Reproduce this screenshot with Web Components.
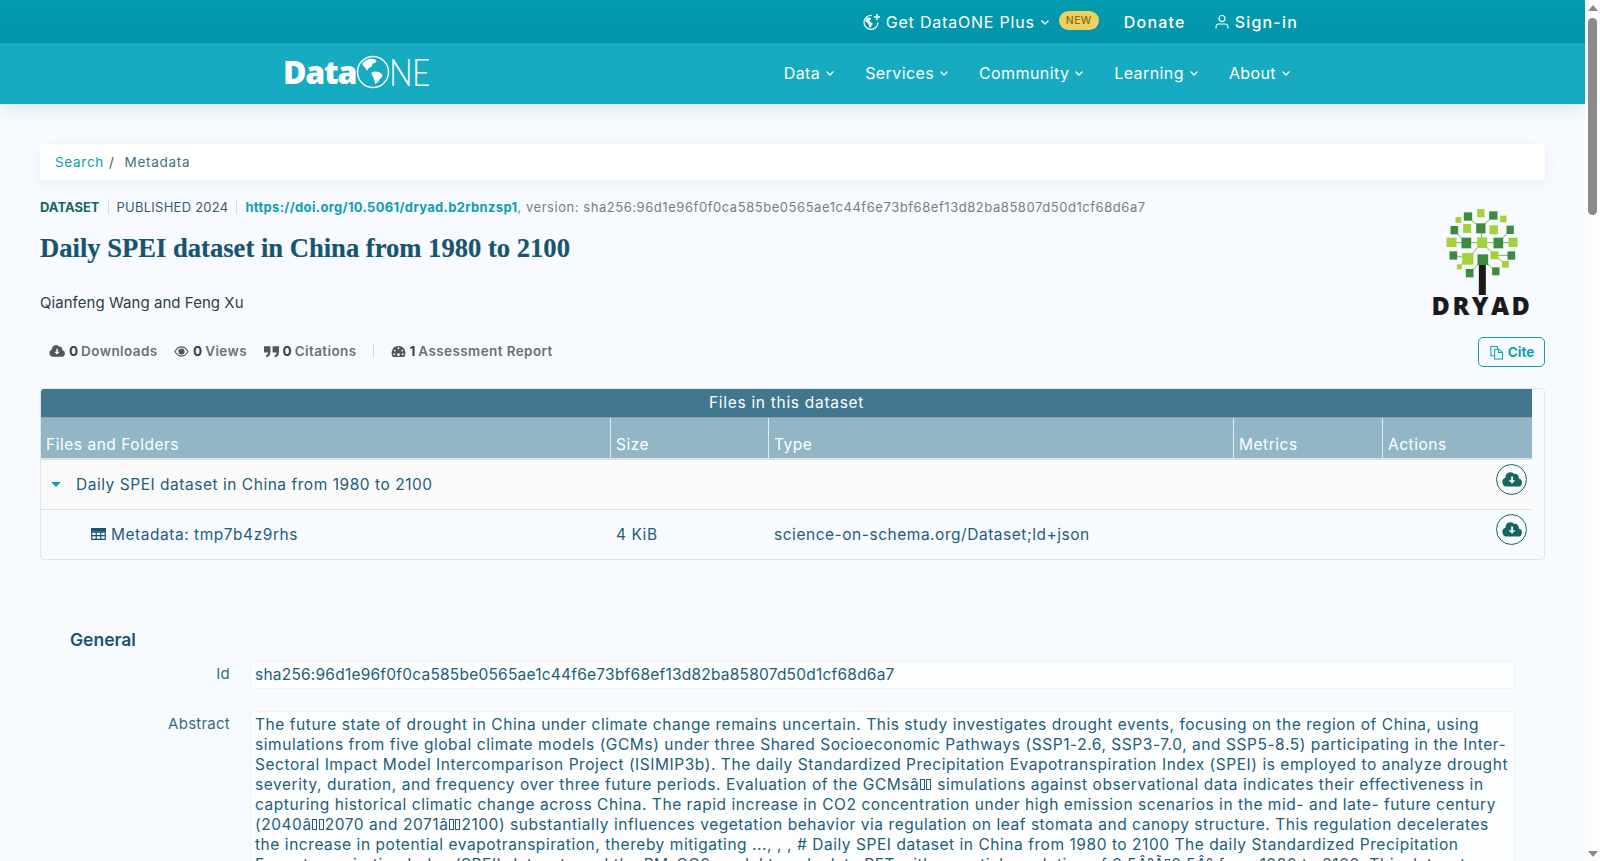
<!DOCTYPE html>
<html lang="en">
<head>
<meta charset="utf-8">
<title>Daily SPEI dataset in China from 1980 to 2100</title>
<style>
  html, body { height: 100%; overflow: hidden; }
  body { margin: 0; background: #f7fbff; font-family: "Inter", "Liberation Sans", sans-serif; color: #19546f; }
  .tofu { display: inline-block; box-sizing: border-box; width: 5px; height: 11px; margin: 0 1px 0 .5px; border: 1px solid currentColor; }
</style>
</head>
<body>

<app-shell>
  <site-header></site-header>
  <main-wrap>
    <bread-crumb></bread-crumb>
    <dataset-head></dataset-head>
    <file-table></file-table>
    <meta-section heading="General">
      <meta-field label="Id" style="--ls: .22px">sha256:96d1e96f0f0ca585be0565ae1c44f6e73bf68ef13d82ba85807d50d1cf68d6a7</meta-field>
      <meta-field label="Abstract" id="abstract"></meta-field>
    </meta-section>
  </main-wrap>
</app-shell>

<script>
const FONT = '"Inter", "Open Sans", "Liberation Sans", sans-serif';
const chevron = '<svg class="chev" viewBox="0 0 10 10" width="10" height="10"><path d="M1.5 3.5 5 7l3.500-3.500" fill="none" stroke="currentColor" stroke-width="1.300"/></svg>';
const cloudDown = '<svg viewBox="0 0 24 18" fill="currentColor"><path d="M20 7.800A4.500 4.500 0 0 0 14.800 2.300 6 6 0 0 0 4.300 6.600 5.600 5.600 0 0 0 6 17.500h13a4.900 4.900 0 0 0 1-9.700Z"/><path d="M11 5.500h2.200V10h2.900L12 14.200 7.900 10H11Z" fill="var(--hole, #fff)"/></svg>';

// @ marks a byte of the abstract that does not decode: it shows as a small box
const ABSTRACT = 'The future state of drought in China under climate change remains uncertain. This study investigates drought events, focusing on the region of China, using simulations from five global climate models (GCMs) under three Shared Socioeconomic Pathways (SSP1-2.6, SSP3-7.0, and SSP5-8.5) participating in the Inter-Sectoral Impact Model Intercomparison Project (ISIMIP3b). The daily Standardized Precipitation Evapotranspiration Index (SPEI) is employed to analyze drought severity, duration, and frequency over three future periods. Evaluation of the GCMs\u00e2@@ simulations against observational data indicates their effectiveness in capturing historical climatic change across China. The rapid increase in CO2 concentration under high emission scenarios in the mid- and late- future century (2040\u00e2@@2070 and 2071\u00e2@@2100) substantially influences vegetation behavior via regulation on leaf stomata and canopy structure. This regulation decelerates the increase in potential evapotranspiration, thereby mitigating ..., , , # Daily SPEI dataset in China from 1980 to 2100 The daily Standardized Precipitation Evapotranspiration Index (SPEI) dataset used the PM-CO2 model to calculate PET with a spatial resolution of 0.5\u00c2\u00b0\u00c3@0.5\u00c2\u00b0 from 1980 to 2100. This dataset';

class AppShell extends HTMLElement {
  constructor() {
    super();
    this.attachShadow({ mode: 'open' });
    this.shadowRoot.innerHTML = `
      <style>
        :host { display: flex; height: 100vh; }
        .page { flex: 1; min-width: 0; overflow: hidden; }
        .scroll { flex: none; width: 15px; background: #fbfdff; display: flex; flex-direction: column; align-items: center; padding: 5px 0 4px; box-sizing: border-box; }
        .up, .down { width: 0; height: 0; border: 5px solid transparent; }
        .up { border-top: 0; border-bottom: 6px solid #8a8a8a; }
        .down { border-bottom: 0; border-top: 6px solid #8a8a8a; margin-top: auto; }
        .thumb { width: 9px; height: 197px; margin-top: 7px; background: #8a8a8a; border-radius: 5px; }
      </style>
      <div class="page"><slot></slot></div>
      <div class="scroll"><span class="up"></span><span class="thumb"></span><span class="down"></span></div>`;
  }
}

class SiteHeader extends HTMLElement {
  constructor() {
    super();
    this.attachShadow({ mode: 'open' });
    this.shadowRoot.innerHTML = `
      <style>
        :host { display: block; font-family: ${FONT}; color: #fff; box-shadow: 0 6px 18px rgba(60,110,140,.12); position: relative; }
        .top { height: 43px; background: linear-gradient(#049cb0, #0294a8); display: flex; justify-content: flex-end; align-items: center; padding-right: 287px; font-size: 16px; letter-spacing: .8px; }
        .plus { display: flex; align-items: center; gap: 5px; }
        .badge { background: #edd064; color: #8a6d12; font-size: 10.500px; font-weight: 500; border-radius: 10px; padding: 3px 7px; margin-left: 9px; margin-top: -3px; letter-spacing: .4px; }
        .donate { margin-left: 25px; font-weight: 500; letter-spacing: 1.200px; }
        .sign { margin-left: 28px; display: flex; align-items: center; gap: 5px; font-weight: 500; letter-spacing: 1.200px; }
        .main { height: 61px; background: #16abc0; display: flex; align-items: center; padding-left: 283px; padding-right: 294px; justify-content: space-between; }
        .logo { display: flex; align-items: center; font-family: "Open Sans", sans-serif; font-size: 32px; line-height: 34px; margin-top: -4px; }
        .logo b { font-weight: 800; letter-spacing: -1.200px; }
        .logo span { font-weight: 300; letter-spacing: -1px; font-size: 37px; margin-left: -1px; font-family: "Lato", sans-serif; transform: scaleX(.85); transform-origin: left; }
        nav { display: flex; gap: 30px; font-size: 16px; letter-spacing: .4px; margin-top: -1px; }
        nav a { display: flex; align-items: center; gap: 5px; }
        svg { display: block; }
      </style>
      <div class="top">
        <span class="plus">
          <svg viewBox="0 0 18 18" width="18" height="18" fill="none" stroke="#fff" stroke-width="1.200"><path d="M15 9.500A7 7 0 1 1 9 2.500"/><path d="M14 1v6M11 4h6" stroke-width="1.500"/><path d="M3.500 5c2-1 3.500-.5 4.500.5 0 1.500-1.500 1-1.500 2.500S9 9 9.500 10.500 8 13 7 15c-1-1-1-3-1.500-4S3 9 2.500 8Z" fill="#fff" stroke="none"/></svg>
          Get DataONE Plus ${chevron}
        </span>
        <span class="badge">NEW</span>
        <span class="donate">Donate</span>
        <span class="sign">
          <svg viewBox="0 0 16 16" width="16" height="16" fill="none" stroke="#fff" stroke-width="1.100"><circle cx="8" cy="4.500" r="3"/><path d="M2 14.500v-1.500a3 3 0 0 1 3-3h6a3 3 0 0 1 3 3v1.500"/></svg>
          Sign-in
        </span>
      </div>
      <div class="main">
        <div class="logo">
          <b>Data</b>
          <svg viewBox="0 0 34 34" width="34" height="34"><circle cx="17" cy="17" r="15.500" fill="none" stroke="#fff" stroke-width="1.400"/><path d="M6 9c3-4 7-6 12-5 3 1 3 3 1 4-2 0-3 1-3 3-1 2-3 1-4 3s-1 2-2 0c-1-2-3-3-4-5ZM16 17c3-1 7-1 10 2 1 2 0 3-2 5-1 2-3 4-5 5 0-3-1-5-2-7-1-2-2-4-1-5Z" fill="#fff"/></svg>
          <span>NE</span>
        </div>
        <nav>
          <a>Data ${chevron}</a>
          <a>Services ${chevron}</a>
          <a>Community ${chevron}</a>
          <a>Learning ${chevron}</a>
          <a>About ${chevron}</a>
        </nav>
      </div>`;
  }
}

class MainWrap extends HTMLElement {
  constructor() {
    super();
    this.attachShadow({ mode: 'open' });
    this.shadowRoot.innerHTML = `
      <style>
        :host { display: block; padding: 40px 40px 0; height: 757px; overflow: hidden; box-sizing: border-box; font-family: ${FONT}; }
      </style>
      <slot></slot>`;
  }
}

class BreadCrumb extends HTMLElement {
  constructor() {
    super();
    this.attachShadow({ mode: 'open' });
    this.shadowRoot.innerHTML = `
      <style>
        :host { display: flex; height: 36px; background: #fff; border-radius: 3px; box-shadow: 0 4px 14px rgba(60,90,110,.08); align-items: center; padding-left: 15px; font-size: 13.500px; letter-spacing: .7px; color: #3f6f87; }
        a { color: #119db0; }
        i { font-style: normal; margin: 0 10px 0 5px; color: #456; }
      </style>
      <a>Search</a><i>/</i><span>Metadata</span>`;
  }
}

class DatasetHead extends HTMLElement {
  constructor() {
    super();
    this.attachShadow({ mode: 'open' });
    this.shadowRoot.innerHTML = `
      <style>
        :host { display: flex; justify-content: space-between; margin-top: 18px; margin-bottom: 21px; }
        .left { min-width: 0; }
        .line { font-size: 13px; line-height: 18px; color: #767e84; white-space: nowrap; display: flex; align-items: center; letter-spacing: .55px; }
        .kind { font-weight: 700; color: #16665f; letter-spacing: 0; }
        .pub { color: #3c5a6b; letter-spacing: .25px; }
        .sep { width: 1px; height: 13px; background: #d5dde2; margin: 0 8px; }
        .doi { font-weight: 700; color: #119db0; letter-spacing: .32px; }
        h1 { margin: 16px 0 0; font: 700 26.600px/32px "Liberation Serif", serif; color: #19546f; -webkit-text-stroke: .2px #19546f; }
        .auth { margin-top: 29px; font-size: 15px; letter-spacing: .05px; line-height: 20px; color: #2f3c44; }
        .stats { margin-top: 28px; padding-left: 9px; display: flex; align-items: center; height: 20px; font-size: 13.500px; font-weight: 600; color: #6c6f73; letter-spacing: .4px; }
        .stats b { color: #3c3f43; font-weight: 700; margin: 0 3px 0 4px; letter-spacing: 0; }
        .stats span { display: flex; align-items: center; margin-right: 16.500px; }
        .stats svg { color: #555; display: block; }
        .bar { width: 1px; height: 14px; background: #cfd6da; }
        .right { display: flex; flex-direction: column; align-items: flex-end; flex: none; }
        .dryad { display: flex; flex-direction: column; align-items: center; margin-top: 11px; width: 100px; margin-right: 13px; }
        .dryad svg { display: block; }
        .dryad strong { font: 800 25px/18px "Open Sans", sans-serif; letter-spacing: 2.500px; color: #1b1b1b; margin-top: 1px; }
        .cite { margin-top: 23px; height: 30px; width: 67px; box-sizing: border-box; border: 1px solid #119db0; border-radius: 5px; color: #119db0; display: flex; align-items: center; justify-content: center; gap: 4px; font-size: 13.500px; font-weight: 700; }
      </style>
      <div class="left">
        <div class="line">
          <span class="kind">DATASET</span><span class="sep"></span>
          <span class="pub">PUBLISHED 2024</span><span class="sep"></span>
          <span><span class="doi">https://doi.org/10.5061/dryad.b2rbnzsp1</span>, version: sha256:96d1e96f0f0ca585be0565ae1c44f6e73bf68ef13d82ba85807d50d1cf68d6a7</span>
        </div>
        <h1>Daily SPEI dataset in China from 1980 to 2100</h1>
        <div class="auth">Qianfeng Wang and Feng Xu</div>
        <div class="stats">
          <span><svg viewBox="0 0 24 18" width="16" height="12" fill="currentColor"><path d="M20 7.800A4.500 4.500 0 0 0 14.800 2.300 6 6 0 0 0 4.300 6.600 5.600 5.600 0 0 0 6 17.500h13a4.900 4.900 0 0 0 1-9.700Z"/><path d="M11 5.500h2.200V10h2.900L12 14.200 7.900 10H11Z" fill="#f7fbff"/></svg><b>0</b>Downloads</span>
          <span><svg viewBox="0 0 16 12" width="15" height="11" fill="none" stroke="currentColor" stroke-width="1.200"><path d="M.8 6C3 2.500 5.500 1 8 1s5 1.500 7.200 5C13 9.500 10.500 11 8 11S3 9.500.8 6Z"/><circle cx="8" cy="6" r="2.800" fill="currentColor"/></svg><b>0</b>Views</span>
          <span><svg viewBox="0 0 14 12" width="15" height="13" fill="currentColor"><path d="M0 1h6v5.500C6 9.500 4.500 11 2 11.500V9.500c1.200-.3 1.800-1 1.800-2.500H0ZM8 1h6v5.500c0 3-1.500 4.500-4 5V9.500c1.200-.3 1.800-1 1.800-2.500H8Z"/></svg><b>0</b>Citations</span>
          <span class="bar"></span>
          <span><svg viewBox="0 0 16 14" width="15" height="13"><path d="M8 1a7.500 7.500 0 0 0-6.500 11.200l.5.800h12l.5-.8A7.500 7.500 0 0 0 8 1Z" fill="currentColor"/><g fill="#f7fbff"><circle cx="8" cy="3.500" r="1"/><circle cx="4" cy="6" r="1"/><circle cx="12" cy="6" r="1"/><circle cx="3.500" cy="10" r="1"/><circle cx="12.500" cy="10" r="1"/><circle cx="8" cy="10.500" r="1.500"/></g></svg><b>1</b>Assessment Report</span>
        </div>
      </div>
      <div class="right">
        <div class="dryad">
          <svg viewBox="197 57 215 258" width="72" height="86">
            <g stroke="#7fb24f" stroke-width="3" fill="none">
              <path d="M305 158 301 115M301 115 262 80M301 115 338 77M258 158H213M258 158H305M352 158H397M305 158H352M305 158 262 205M305 158 342 196M258 160 222 122M352 160 389 120M262 205 219 196M262 205 236 230M342 196 392 196M342 196 375 222M306 209 268 250M306 209 346 244"/>
            </g>
            <g fill="#3f8a3f"><rect x="250" y="67" width="25" height="25"/><rect x="326" y="64" width="25" height="25"/><rect x="287" y="100" width="28" height="30"/><rect x="210" y="108" width="23" height="25"/><rect x="378" y="107" width="22" height="25"/><rect x="243" y="143" width="29" height="32"/><rect x="339" y="143" width="29" height="32"/><rect x="207" y="184" width="23" height="25"/><rect x="381" y="184" width="23" height="25"/><rect x="291" y="193" width="32" height="32"/><rect x="256" y="237" width="23" height="25"/><rect x="335" y="232" width="22" height="24"/></g>
            <g fill="#a5d13a"><rect x="290" y="57" width="22" height="25"/><rect x="225" y="81" width="17" height="18"/><rect x="359" y="77" width="19" height="20"/><rect x="248" y="102" width="24" height="27"/><rect x="327" y="106" width="25" height="27"/><rect x="198" y="143" width="30" height="28"/><rect x="384" y="143" width="27" height="28"/><rect x="290" y="142" width="30" height="32"/><rect x="245" y="189" width="34" height="35"/><rect x="330" y="184" width="24" height="24"/><rect x="365" y="213" width="20" height="20"/><rect x="229" y="223" width="15" height="15"/></g>
            <rect x="295" y="225" width="21" height="90" fill="#1b1b1b"/>
          </svg>
          <strong>DRYAD</strong>
        </div>
        <div class="cite">
          <svg viewBox="0 0 16 16" width="15" height="15" fill="none" stroke="currentColor" stroke-width="1.100"><path d="M6 1.500H2v10h4M6 1.500h3v3M6 4.500h4.500l4 3.500v7H6Z"/><path d="M10 4.500V8h4.500"/></svg>
          Cite
        </div>
      </div>`;
  }
}

class FileTable extends HTMLElement {
  constructor() {
    super();
    this.attachShadow({ mode: 'open' });
    const btn = `<span class="dl">${cloudDown}</span>`;
    this.shadowRoot.innerHTML = `
      <style>
        :host { display: block; border: 1px solid #e3e6e8; border-radius: 4px; padding-right: 12px; font-size: 15.500px; letter-spacing: .53px; color: #245d79; }
        .title { height: 28px; background: #40768e; color: #fff; display: flex; align-items: center; justify-content: center; letter-spacing: .7px; border-radius: 3px 0 0 0; padding-bottom: 1px; box-sizing: border-box; }
        .cols, .row { display: grid; grid-template-columns: 569px 158px 465px 149px 1fr; }
        .cols { height: 41px; background: #92b6c5; color: #fff; border-top: 1px solid #7ea4b5; box-sizing: border-box; }
        .cols div { padding: 17px 5px 0; border-left: 1px solid #e6edf0; }
        .cols div:first-child { border-left: 0; }
        .row { align-items: center; box-sizing: border-box; }
        .row.folder { background: #fafafa; height: 51px; border-top: 2px solid #e0e0e0; }
        .row.file { height: 50px; border-top: 1px solid #dedfe0; }
        .name { display: flex; align-items: center; white-space: nowrap; }
        .tri { width: 0; height: 0; border: 5px solid transparent; border-top: 5.500px solid #119db0; border-bottom: 0; margin: 0 15px 0 10px; }
        .tbl { margin: -2px 5px 0 50px; color: #19546f; display: block; flex: none; }
        .cell { padding-left: 6px; }
        .act { display: flex; justify-content: flex-end; padding-right: 5px; }
        .dl { width: 31px; height: 31px; box-sizing: border-box; border: 1px solid #15665f; border-radius: 50%; display: flex; align-items: center; justify-content: center; color: #15665f; margin-top: -11px; }
        .dl svg { width: 20px; height: 15px; display: block; }
        .folder .dl { --hole: #fafafa; }
        .file .dl { --hole: #f7fbff; }
      </style>
      <div class="title">Files in this dataset</div>
      <div class="cols"><div>Files and Folders</div><div>Size</div><div>Type</div><div>Metrics</div><div>Actions</div></div>
      <div class="row folder">
        <div class="name"><span class="tri"></span>Daily SPEI dataset in China from 1980 to 2100</div>
        <div></div><div></div><div></div><div class="act">${btn}</div>
      </div>
      <div class="row file">
        <div class="name">
          <svg class="tbl" viewBox="0 0 16 13" width="15" height="12"><path d="M.7.7h14.600v11.600H.7ZM.7 4.400h14.600M.7 8.300h14.600M5.500 4.400v7.900M10.500 4.400v7.900" fill="none" stroke="currentColor" stroke-width="1.300"/><rect width="16" height="4" fill="currentColor"/></svg>
          Metadata: tmp7b4z9rhs
        </div>
        <div class="cell">4 KiB</div>
        <div class="cell">science-on-schema.org/Dataset;ld+json</div>
        <div></div><div class="act">${btn}</div>
      </div>`;
  }
}

class MetaSection extends HTMLElement {
  static get observedAttributes() {
    return ['heading'];
  }

  constructor() {
    super();
    this.attachShadow({ mode: 'open' });
  }

  connectedCallback() {
    this.render();
  }

  attributeChangedCallback() {
    this.render();
  }

  render() {
    const heading = this.getAttribute('heading') || '';
    this.shadowRoot.innerHTML = `
      <style>
        :host { display: block; margin-top: 68px; padding: 0 30px; }
        h2 { margin: 0 0 9px; font-size: 17.500px; line-height: 24px; font-weight: 600; color: #19546f; }
      </style>
      <h2>${heading}</h2>
      <slot></slot>`;
  }
}

class MetaField extends HTMLElement {
  constructor() {
    super();
    this.attachShadow({ mode: 'open' });
    const label = this.getAttribute('label') || '';
    this.shadowRoot.innerHTML = `
      <style>
        :host { display: grid; grid-template-columns: 160px 1fr; column-gap: 20px; margin-bottom: 22px; font-size: 15.500px; line-height: 20px; color: #245d79; }
        .lab { text-align: right; color: #3b6a82; font-size: 15px; letter-spacing: .25px; margin-top: 3px; }
        .val { background: #fcfdfe; border: 1px solid #eff1f3; border-radius: 3px; padding: 3px 2px 3px 4px; letter-spacing: var(--ls, .55px); }
      </style>
      <div class="lab">${label}</div>
      <div class="val"><slot></slot></div>`;
  }
}

customElements.define('app-shell', AppShell);
customElements.define('site-header', SiteHeader);
customElements.define('main-wrap', MainWrap);
customElements.define('bread-crumb', BreadCrumb);
customElements.define('dataset-head', DatasetHead);
customElements.define('file-table', FileTable);
customElements.define('meta-section', MetaSection);
customElements.define('meta-field', MetaField);

const abstractField = document.getElementById('abstract');
for (const part of ABSTRACT.split(/(@)/)) {
  if (part === '@') {
    const box = document.createElement('span');
    box.className = 'tofu';
    abstractField.append(box);
  } else {
    abstractField.append(part);
  }
}
</script>
</body>
</html>
